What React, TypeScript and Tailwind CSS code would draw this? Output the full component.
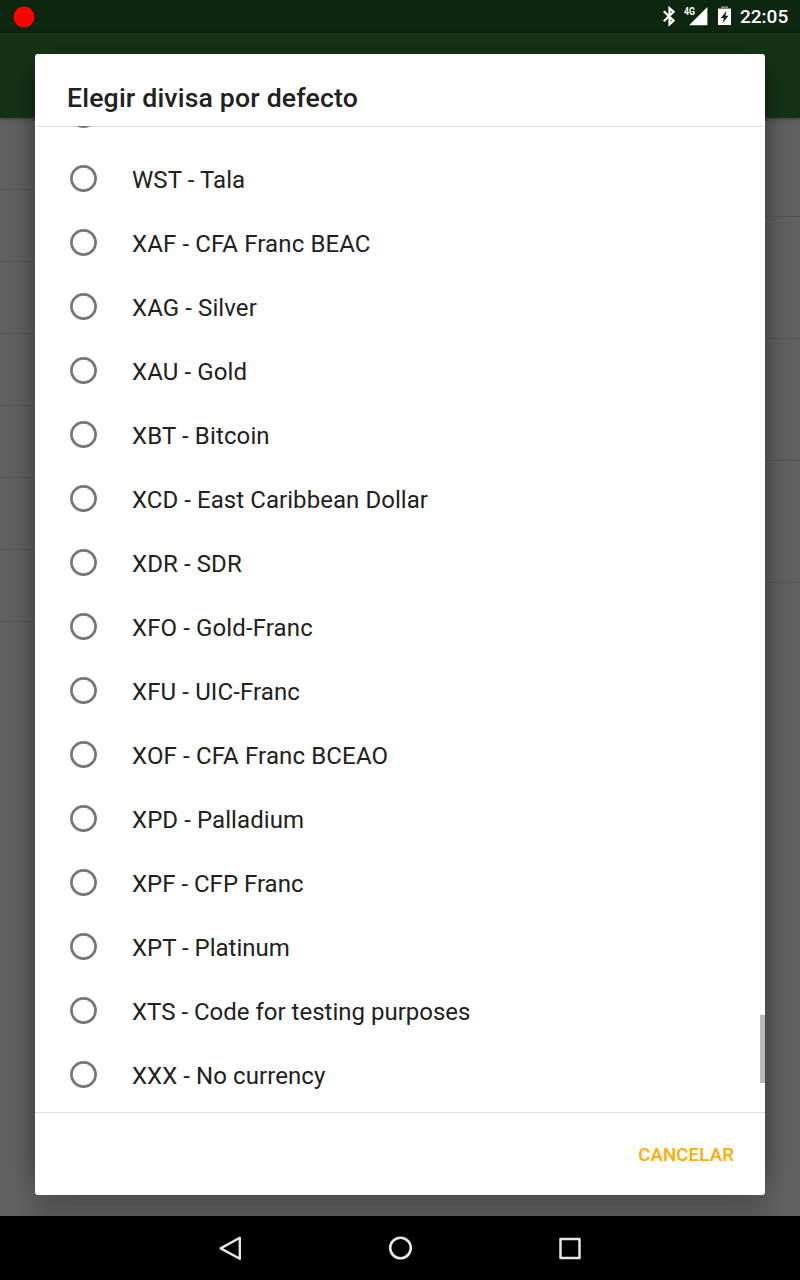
const currencies = [
  { name: 'WST - Tala', tracking: 'tracking-[0.08px]' },
  { name: 'XAF - CFA Franc BEAC', tracking: 'tracking-[0.12px]' },
  { name: 'XAG - Silver', tracking: 'tracking-[0.1px]' },
  { name: 'XAU - Gold', tracking: 'tracking-[0.12px]' },
  { name: 'XBT - Bitcoin', tracking: 'tracking-[0.13px]' },
  { name: 'XCD - East Caribbean Dollar', tracking: 'tracking-[0.06px]' },
  { name: 'XDR - SDR', tracking: 'tracking-[0.1px]' },
  { name: 'XFO - Gold-Franc', tracking: 'tracking-[0.12px]' },
  { name: 'XFU - UIC-Franc', tracking: 'tracking-[0.12px]' },
  { name: 'XOF - CFA Franc BCEAO', tracking: 'tracking-[0.14px]' },
  { name: 'XPD - Palladium', tracking: 'tracking-[0.08px]' },
  { name: 'XPF - CFP Franc', tracking: 'tracking-normal' },
  { name: 'XPT - Platinum', tracking: 'tracking-normal' },
  { name: 'XTS - Code for testing purposes', tracking: 'tracking-normal' },
  { name: 'XXX - No currency', tracking: 'tracking-[0.07px]' },
];

function StatusBar() {
  return (
    <header className="flex h-[33px] shrink-0 items-center bg-[#0d260f] pr-[11px] pl-[13px] text-white">
      <svg className="h-[22px] w-[22px]" viewBox="0 0 22 22">
        <circle cx="11" cy="11" r="10.5" fill="#ff0000" />
      </svg>
      <div className="ml-auto flex items-center">
        <svg className="h-[33px] w-[100px]" viewBox="0 0 100 33" fill="white">
          <path
            d="M23.8 11.2L33.6 20.6L29.5 24.2V8.2L33.6 11.8L23.8 21.2"
            fill="none"
            stroke="white"
            strokeWidth="2.2"
          />
          <path d="M49 25.3L67.4 7V25.3Z" />
          <text x="44" y="14.9" fontSize="10" fontWeight="700" fontFamily="Roboto, sans-serif" textLength="11" lengthAdjust="spacingAndGlyphs">4G</text>
          <path d="M81 6.3H88V8H91V9.3H78V8H81Z" opacity=".45" />
          <path d="M78 9H91V25H78Z" />
          <path d="M86.6 10.8L80.8 17.9H83.9L82.6 23L88.6 15.8H85.4Z" fill="#0d260f" />
        </svg>
        <span className="w-[49px] pt-px text-[19px] leading-[24px] font-medium whitespace-nowrap">22:05</span>
      </div>
    </header>
  );
}

function Background() {
  return (
    <>
      <div className="z-10 h-[85px] shrink-0 bg-[#143315] shadow-[0_1px_4px_rgba(0,0,0,0.4)]" />
      <main className="flex flex-1 justify-between bg-[#606060]">
        <div className="w-[300px]">
          {[1, 2, 3, 4, 5, 6, 7].map((n) => (
            <div key={n} className="h-[72px] border-b border-[#545454]" />
          ))}
        </div>
        <div className="w-[500px]">
          <div className="h-[99px] border-b border-[#545454]" />
          {[1, 2, 3].map((n) => (
            <div key={n} className="h-[122px] border-b border-[#545454]" />
          ))}
        </div>
      </main>
    </>
  );
}

function Radio() {
  return (
    <svg className="mb-px h-[27px] w-[27px] shrink-0" viewBox="0 0 27 27" fill="none" stroke="#757575" strokeWidth="2.7">
      <circle cx="13.5" cy="13.5" r="12.1" />
    </svg>
  );
}

function CurrencyDialog() {
  return (
    <section
      role="dialog"
      className="absolute top-[54px] left-[35px] z-20 flex h-[1141px] w-[730px] flex-col rounded-[3px] bg-white shadow-[0_24px_20px_rgba(0,0,0,0.14),-16px_0_22px_-16px_rgba(0,0,0,0.34),16px_0_22px_-16px_rgba(0,0,0,0.34)]"
    >
      <h1 className="h-[72px] shrink-0 pt-[28px] pl-8 text-[26.67px] leading-[32px] font-medium tracking-[0.16px] text-[#212121]">
        Elegir divisa por defecto
      </h1>
      <div className="relative h-[986px] shrink-0 overflow-hidden shadow-[inset_0_1px_0_#dedede]">
        <ul className="-mt-[43px]">
          <li className="flex h-16 items-center pl-[35px]">
            <Radio />
          </li>
          {currencies.map(({ name, tracking }) => (
            <li key={name} className="flex h-16 items-center pl-[35px]">
              <Radio />
              <span className={`ml-[35px] pt-[2px] text-[24px] leading-[28px] text-[#212121] ${tracking}`}>{name}</span>
            </li>
          ))}
        </ul>
        <div className="absolute top-[889px] right-0 h-[68px] w-[5px] bg-[#b8b8b8]" />
      </div>
      <footer className="flex flex-1 items-center justify-end border-t border-[#dedede] pr-[31px]">
        <button className="pt-px text-[18.67px] leading-[24px] font-medium tracking-[0.12px] text-[#ffab00]">CANCELAR</button>
      </footer>
    </section>
  );
}

function NavigationBar() {
  return (
    <nav className="z-30 flex h-16 shrink-0 items-center justify-center gap-[138px] bg-black">
      <svg className="h-8 w-8" viewBox="0 0 32 32" fill="none" stroke="#e6e6e6" strokeWidth="2.4" strokeLinejoin="round">
        <path d="M25.8 5.8V26.8L6.7 16.4Z" />
      </svg>
      <svg className="h-8 w-8" viewBox="0 0 32 32" fill="none" stroke="#e6e6e6" strokeWidth="2.6">
        <circle cx="16.5" cy="16" r="10.3" />
      </svg>
      <svg className="h-8 w-8" viewBox="0 0 32 32" fill="none" stroke="#e6e6e6" strokeWidth="2.5" strokeLinejoin="round">
        <rect x="6.5" y="7" width="19" height="19" />
      </svg>
    </nav>
  );
}

export default function App() {
  return (
    <div className="relative flex h-[1280px] w-[800px] flex-col overflow-hidden font-[Roboto,sans-serif]">
      <StatusBar />
      <Background />
      <CurrencyDialog />
      <NavigationBar />
    </div>
  );
}
